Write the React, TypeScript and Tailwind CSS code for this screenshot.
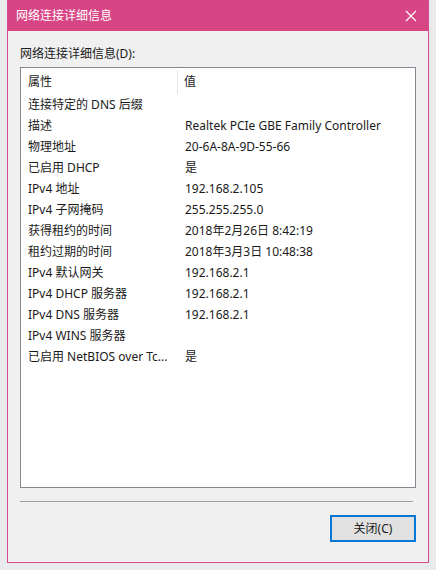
const rows: [string, string][] = [
  ['连接特定的 DNS 后缀', ''],
  ['描述', 'Realtek PCIe GBE Family Controller'],
  ['物理地址', '20-6A-8A-9D-55-66'],
  ['已启用 DHCP', '是'],
  ['IPv4 地址', '192.168.2.105'],
  ['IPv4 子网掩码', '255.255.255.0'],
  ['获得租约的时间', '2018年2月26日 8:42:19'],
  ['租约过期的时间', '2018年3月3日 10:48:38'],
  ['IPv4 默认网关', '192.168.2.1'],
  ['IPv4 DHCP 服务器', '192.168.2.1'],
  ['IPv4 DNS 服务器', '192.168.2.1'],
  ['IPv4 WINS 服务器', ''],
  ['已启用 NetBIOS over Tc...', '是'],
]

export default function App() {
  return (
    <div
      className="w-[436px] h-[570px] bg-[#e9eaec] pl-[7px] overflow-hidden text-[12px] text-[#1a1a1a]"
      style={{ fontFamily: '"Noto Sans", "Noto Sans CJK SC", sans-serif' }}
    >
      <div className="w-[422px] h-[563px] border border-[#d5498a] border-t-0 bg-[#f0f0f0] flex flex-col">
        {/* title bar */}
        <div className="h-[31px] bg-[#d84585] flex items-center justify-between pl-[8px] pr-[8px] text-white">
          <span className="text-[12px]">网络连接详细信息</span>
          <svg width="12" height="12" viewBox="0 0 12 12" className="mr-[3px]">
            <path d="M1 1L11 11M11 1L1 11" stroke="white" strokeWidth="1.2" />
          </svg>
        </div>

        <div className="flex flex-col pl-[12px] pr-[12px]">
          <div className="h-[36px] flex items-end pb-[4px]">网络连接详细信息(D):</div>

          <div className="h-[421px] w-[396px] border border-[#828790] bg-white flex flex-col pt-[2px]">
            <div className="h-[24px] flex items-center">
              <div className="w-[157px] h-full flex items-center pl-[7px] border-r border-[#e5e5e5]">属性</div>
              <div className="pl-[6px]">值</div>
            </div>
            {rows.map(([k, v]) => (
              <div key={k} className="h-[21px] flex items-center">
                <div className="w-[157px] pl-[7px] whitespace-nowrap overflow-hidden">{k}</div>
                <div className="pl-[7px] whitespace-nowrap">{v}</div>
              </div>
            ))}
          </div>

          <div className="mt-[13px] h-px w-[393px] bg-[#a0a0a0]" />

          <div className="flex justify-end mt-[13px]">
            <button className="w-[86px] h-[27px] border-2 border-[#0078d7] bg-[#e1e1e1] text-[12px] text-[#1a1a1a]">
              关闭(C)
            </button>
          </div>
        </div>
      </div>
    </div>
  )
}
